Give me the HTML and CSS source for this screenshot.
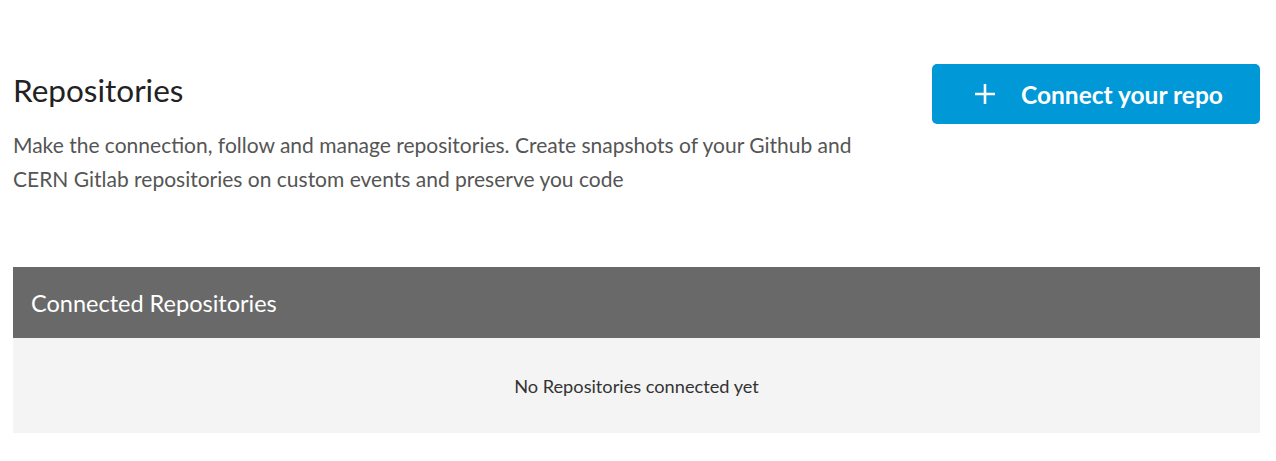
FILE: index.html
```html
<!DOCTYPE html>
<html>
<head>
<meta charset="utf-8">
<link rel="stylesheet" href="styles.css">
</head>
<body>
<main class="page">
  <section class="intro">
    <div class="intro-text">
      <h1 class="title">Repositories</h1>
      <p class="desc">Make the connection, follow and manage repositories. Create snapshots of your Github and CERN Gitlab repositories on custom events and preserve you code</p>
    </div>
    <button class="connect-btn">
      <svg class="plus" width="22" height="22" viewBox="0 0 22 22"><path d="M11 1v20M1 11h20" stroke="#fff" stroke-width="2.6" fill="none"/></svg>
      <span>Connect your repo</span>
    </button>
  </section>
  <section class="panel">
    <div class="panel-head">Connected Repositories</div>
    <div class="panel-body">No Repositories connected yet</div>
  </section>
</main>
</body>
</html>
```
FILE: styles.css
```css
* { box-sizing: border-box; }
body { margin: 0; background: #fff; font-family: Lato, "Open Sans", sans-serif; }
.page { padding: 64px 16px 0 13px; }
.intro { display: flex; justify-content: space-between; align-items: flex-start; }
.intro-text { width: 860px; }
.title { margin: 8px 0 0; font-size: 31.5px; font-weight: 400; color: #222; line-height: 36px; }
.desc { margin: 20px 0 0; font-size: 21px; line-height: 34px; color: #555; }
.connect-btn { width: 328px; height: 60px; background: #0098d6; border: none; border-radius: 5px; color: #fff; display: flex; align-items: center; padding: 0 0 0 42px; gap: 25px; font-family: Lato, sans-serif; font-size: 24.5px; font-weight: 700; cursor: pointer; }
.panel { margin-top: 71px; }
.panel-head { background: #696969; color: #fff; height: 71px; display: flex; align-items: center; padding-left: 18px; font-size: 23.5px; }
.panel-body { background: #f4f4f4; height: 95px; display: flex; align-items: center; justify-content: center; font-size: 18.2px; color: #333; }
```
